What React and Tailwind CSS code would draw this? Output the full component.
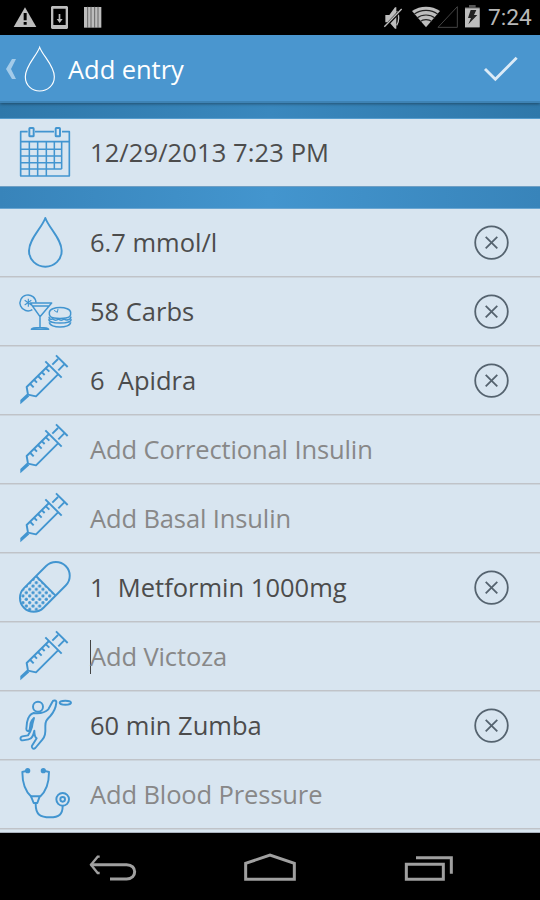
import React from 'react';

const Icon = ({ top, children }) => (
  <svg
    className="w-20 h-[67px] shrink-0"
    viewBox={`0 ${top} 240 201`}
    fill="none"
    stroke="#4295d0"
    strokeWidth="5.8"
    strokeLinejoin="round"
  >
    {children}
  </svg>
);

const CalendarIcon = () => (
  <Icon top={69}>
    <path d="M83 107H62v133h146V107h-22M105 107h57M62 137h146" strokeWidth="5" />
    <rect x="88" y="96" width="13" height="25" rx="2" />
    <rect x="167" y="96" width="13" height="25" rx="2" />
    <path d="M88 137v103M113 137v103M139 137v103M163 137v82M185 137v82M62 160h123M62 180h123M62 200h123M62 219h123" strokeWidth="4.6" />
  </Icon>
);

const DropIcon = () => (
  <Icon top={12}>
    <path d="M136 39C126 68 87 102 87 137c0 28 22 48 49 48s49-20 49-48c0-35-39-69-49-98z" />
  </Icon>
);

const CarbsIcon = () => (
  <Icon top={219}>
    <g strokeWidth="4.5">
      <path d="M97 314a24 24 0 1 1 11-21" />
      <path d="M85 281v24M74 286l20 14M74 300l20-14" strokeWidth="3.5" />
      <path d="M91 294h64l-35 41zM97 303h50M120 335v32M94 373c3-7 49-7 52 0z" />
      <path d="M148 322c2-19 62-19 64 0 1 8-1 10-3 13-10 7-48 7-58 0-2-3-4-6-3-13z" />
      <path d="M147 335c0 8 7 10 11 6 6 6 12 6 17 1 5 5 12 5 17 0 6 5 20 4 21-7M146 343c0 15 68 15 68 0M148 352c1 19 63 19 64 0" />
      <path d="M162 316l10 6M174 312l-2 10" strokeWidth="3" />
    </g>
  </Icon>
);

const SyringeIcon = () => (
  <Icon top={6}>
    <path d="M168 31l35 35M174 42l-17 17M192 59l-17 17M136 49l49 49" />
    <path d="M147 60L80 126l4 23 24 5 66-66" />
    <path d="M91 117l10 10M103 105l8 8M114 93l11 11M126 82l8 8M138 70l10 10" />
    <path d="M80 147l8 7-27 24v-13z" fill="#4295d0" stroke="none" />
  </Icon>
);

const PillIcon = () => (
  <Icon top={12}>
    <defs>
      <pattern id="dots" width="20" height="20" x="84" y="93" patternUnits="userSpaceOnUse">
        <circle cx="5" cy="5" r="4.9" fill="#4295d0" stroke="none" />
        <circle cx="15" cy="15" r="4.9" fill="#4295d0" stroke="none" />
      </pattern>
    </defs>
    <path d="M108 79L73 114c-40 42 20 98 58 57l35-35z" fill="url(#dots)" stroke="none" />
    <rect x="46" y="69" width="177" height="83" rx="41.5" transform="rotate(-45 134.5 110.5)" />
    <path d="M108 78l58 58" />
  </Icon>
);

const ActivityIcon = () => (
  <Icon top={6}>
    <circle cx="114" cy="50" r="15" />
    <ellipse cx="196" cy="38" rx="17" ry="6" />
    <path d="M157 36c2-7 13-6 12 2-2 20-7 28-18 40-12 12-15 16-15 30 1 23-1 31-9 41l-21 25c-6 5-13 0-10-7l14-22c-7-5-7-14-7-23-3 14-6 25-17 26l-18 3c-8 1-9-10-1-12l17-3c5-7 9-15 12-25 1-12 4-19 6-27-5 5-9 10-10 15l-3 20c-2 6-10 5-10-2l2-20c3-16 10-25 20-28 18 2 34-1 44-11z" />
  </Icon>
);

const StethoscopeIcon = () => (
  <Icon top={213}>
    <path d="M82 242l-15 4c0 32 9 58 27 74M131 242l16 4c0 32-9 58-27 74" />
    <circle cx="83" cy="242" r="5" fill="#4295d0" />
    <circle cx="130" cy="242" r="5" fill="#4295d0" />
    <path d="M93 319h26l-7 20h-11z" />
    <path d="M107 341c0 34 14 41 43 41 28 0 38-10 38-34" />
    <circle cx="188" cy="328" r="19" />
    <circle cx="188" cy="328" r="7" />
  </Icon>
);

const RemoveButton = () => (
  <button className="ml-auto mr-[31px]">
    <svg className="w-9 h-[67px]" viewBox="0 0 36 67" fill="none" stroke="#55636f" strokeWidth="1.8">
      <circle cx="18.5" cy="33.6" r="16.3" />
      <path d="M12.7 27.8l11.6 11.6M24.3 27.8L12.7 39.4" />
    </svg>
  </button>
);

const entries = [
  { icon: DropIcon, value: '6.7 mmol/l' },
  { icon: CarbsIcon, value: '58 Carbs' },
  { icon: SyringeIcon, value: '6  Apidra' },
  { icon: SyringeIcon, hint: 'Add Correctional Insulin' },
  { icon: SyringeIcon, hint: 'Add Basal Insulin' },
  { icon: PillIcon, value: '1  Metformin 1000mg' },
  { icon: SyringeIcon, hint: 'Add Victoza', focused: true },
  { icon: ActivityIcon, value: '60 min Zumba' },
  { icon: StethoscopeIcon, hint: 'Add Blood Pressure' },
];

const EntryRow = ({ entry, first }) => {
  const EntryIcon = entry.icon;
  return (
    <div className={`${first ? 'h-[68px]' : 'h-[69px]'} flex items-end border-b border-[#c0c3c8] shadow-[0_1px_0_#ccd5dd] shrink-0`}>
      <EntryIcon />
      <div className="h-[67px] ml-[10px] flex items-center">
        {entry.focused && <span className="w-px h-[34px] -mr-px bg-[#444]" />}
        <span className={`whitespace-pre ${entry.hint ? 'text-[#888] tracking-[-0.12px]' : 'text-[#4c4c4c]'}`}>
          {entry.value || entry.hint}
        </span>
      </div>
      {entry.value && <RemoveButton />}
    </div>
  );
};

const StatusBar = () => (
  <div className="h-[35px] bg-black flex items-center shrink-0">
    <svg className="w-[110px] h-[35px]" viewBox="0 0 330 105" fill="#bdbdbd">
      <path d="M75 22l34 59H41z" />
      <path d="M71 39h9v22h-9zM71 66h9v8h-9z" fill="#000" />
      <path d="M156 18h45l3 3v63l-3 3h-45l-3-3V21zM160 26v49h37V26z" fillRule="evenodd" />
      <path d="M176 42h5v15h7l-9 12-9-12h6z" />
      <path d="M252 21h52v62h-52z" />
      <path d="M263 20v64M273 20v64M284 20v64M294 20v64" stroke="#555" strokeWidth="2.5" />
    </svg>
    <svg className="ml-auto w-[110px] h-[35px]" viewBox="0 0 330 105" fill="#bdbdbd">
      <path d="M46 45h12l17-23h4v64h-4L58 67H46z" />
      <path d="M80 34c8 8 8 32 0 42" fill="none" stroke="#bdbdbd" strokeWidth="4" />
      <path d="M44 82l52-55" stroke="#000" strokeWidth="9" />
      <path d="M43 80l52-53" stroke="#bdbdbd" strokeWidth="4" />
      <path d="M126 33c24-17 60-17 84 0l-42 49z" />
      <path d="M132 43c20-16 52-16 72 0M141 54c15-12 39-12 54 0M150 65c10-8 26-8 36 0" fill="none" stroke="#222" strokeWidth="3.5" />
      <path d="M262 20v62h-58z" fill="none" stroke="#444" strokeWidth="3" />
      <path d="M297 15h20v7h12v60h-44V22h12z" fill="#555" />
      <path d="M285 25h44v57h-44z" />
      <path d="M302 30h17l-7 15h10l-27 28 8-19h-9z" fill="#222" />
    </svg>
    <span className="w-[60px] pl-2 pt-0.5 font-[Roboto] font-normal text-[22.7px] leading-none text-[#b8b8b8]">7:24</span>
  </div>
);

const Header = () => (
  <div className="h-[68px] bg-[#4a96cf] border-b-2 border-[#3e83b5] flex items-center shrink-0 shadow-[0_1px_3px_rgba(0,0,0,0.4)] z-10">
    <svg className="w-[60px] h-[66px]" viewBox="0 105 180 198" fill="none">
      <path d="M36 177h12l-15 30 15 30H36l-18-30z" fill="#a3cbe9" />
      <path d="M119 142c-9 25-43 55-43 88 0 26 20 43 43 43s44-17 44-43c0-33-35-63-44-88z" stroke="#fff" strokeWidth="3.5" />
    </svg>
    <h1 className="ml-2 pt-[3px] text-white tracking-[-0.05px]">Add entry</h1>
    <svg className="ml-auto mr-[20px] w-10 h-[66px]" viewBox="330 105 120 198" fill="none">
      <path d="M345 207l31 31 64-65" stroke="#dcebf7" strokeWidth="8.5" />
    </svg>
  </div>
);

const NavBar = () => (
  <div className="h-[67px] bg-black shrink-0 px-[60px]">
    <svg className="w-[420px] h-[67px]" viewBox="0 39 1260 201" fill="none" stroke="#a0a0a0" strokeWidth="9">
      <path d="M119 110h-6l-20 24 20 25h6" strokeWidth="7" />
      <path d="M92 134h108c32 0 32 43 0 43h-50" />
      <path d="M557 178v-48l73-25 73 25v48z" />
      <path d="M1039 133h111v45h-111zM1068 113h106v48" />
    </svg>
  </div>
);

const App = () => (
  <div className="w-[540px] h-[900px] flex flex-col overflow-hidden bg-[#3b88bf] font-['Open_Sans',sans-serif] text-[25.5px] leading-none">
    <StatusBar />
    <Header />
    <div className="h-4 shrink-0 border-b border-[#559ccd] bg-linear-to-r from-[#2f78aa] via-[#3a88be] to-[#2f78aa]" />
    <div className="h-[67px] bg-[#d8e5f0] flex items-center shrink-0">
      <CalendarIcon />
      <span className="ml-[10px] text-[#4c4c4c] tracking-[0.1px]">12/29/2013 7:23 PM</span>
    </div>
    <div className="h-[23px] shrink-0 border-t border-t-[#6f9fc4] border-b border-b-[#6aa6d2] bg-linear-to-r from-[#3884ba] via-[#4395ce] to-[#3884ba]" />
    <div className="h-[624px] bg-[#d8e5f0] border-b border-[#a9b1bd] flex flex-col overflow-hidden">
      {entries.map((entry, i) => (
        <EntryRow key={i} entry={entry} first={i === 0} />
      ))}
    </div>
    <NavBar />
  </div>
);

export default App;
